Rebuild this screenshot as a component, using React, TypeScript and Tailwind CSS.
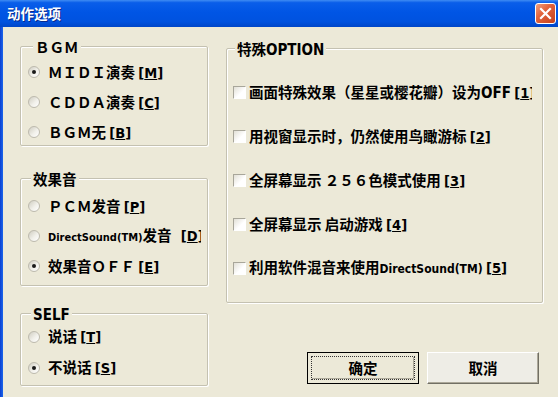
import React from "react";

const NARROW = "font-['Liberation_Sans_Narrow','DejaVu_Sans_Condensed','Arial_Narrow','Liberation_Sans',sans-serif]";

const Latin = ({ children, cls = "text-[15px]" }: { children: React.ReactNode; cls?: string }) => (
  <span className={NARROW + " font-bold " + cls}>{children}</span>
);

const Mn = ({ k, cls = "" }: { k: string; cls?: string }) => (
  <span className={NARROW + " font-bold text-[14.5px] " + cls}>
    [<span className="underline underline-offset-[1px]">{k}</span>]
  </span>
);

const Radio = ({ checked }: { checked?: boolean }) => (
  <span className="w-[12px] h-[12px] shrink-0 rounded-full border border-[#bdbaae] bg-[linear-gradient(135deg,#cfcdc1_0%,#f1f0ea_55%,#ffffff_100%)] flex items-center justify-center">
    {checked && <span className="w-[4px] h-[4px] rounded-full bg-[#1a1a1a]" />}
  </span>
);

const Check = () => (
  <span className="w-[13px] h-[13px] shrink-0 border border-t-[#a8a69a] border-l-[#a8a69a] border-r-white border-b-white bg-[linear-gradient(135deg,#e2e0d6_0%,#ffffff_60%)]" />
);

const Group = ({
  label,
  children,
  cls,
  labelCls = "left-[12px]",
}: {
  label: React.ReactNode;
  children: React.ReactNode;
  cls: string;
  labelCls?: string;
}) => (
  <div
    className={
      "relative border border-[#c4c1b1] rounded-[2px] shadow-[inset_1px_1px_0_#ffffff,1px_1px_0_#ffffff] " + cls
    }
  >
    <div
      className={
        "absolute top-0 -translate-y-1/2 bg-[#ECE9D8] px-[2px] text-[14.5px] font-bold leading-[18px] text-black whitespace-nowrap " +
        labelCls
      }
    >
      {label}
    </div>
    {children}
  </div>
);

const RadioRow = ({ checked, children, h = "h-[30px]" }: { checked?: boolean; children: React.ReactNode; h?: string }) => (
  <div className={"flex items-center pl-[7px] " + h}>
    <Radio checked={checked} />
    <span className="ml-[8px] w-[153px] overflow-hidden whitespace-nowrap text-[14.5px] font-bold leading-[22px] text-black">
      {children}
    </span>
  </div>
);

const CheckRow = ({ children }: { children: React.ReactNode }) => (
  <div className="flex items-center pl-[6px] h-[44px]">
    <Check />
    <span className="ml-[3px] w-[283px] overflow-hidden whitespace-nowrap text-[14.5px] font-bold leading-[22px] text-black">
      {children}
    </span>
  </div>
);

export default function App() {
  return (
    <div className="w-[558px] h-[397px] overflow-hidden bg-[#ECE9D8] flex flex-col font-['Noto_Sans_CJK_SC',sans-serif]">
      {/* Title bar */}
      <div className="h-[27px] shrink-0 flex items-center bg-[linear-gradient(to_bottom,#3f8cf3_0%,#0a5ee9_10%,#0055e5_45%,#0052df_80%,#0046c8_100%)]">
        <span className="ml-[7px] text-white font-bold text-[13.5px] leading-none [text-shadow:1px_1px_0_#0a2a8a]">
          动作选项
        </span>
        <div className="ml-auto mr-[2px] w-[21px] h-[21px] rounded-[3px] border border-white bg-[linear-gradient(135deg,#f0a080_0%,#e2643d_40%,#c4401c_100%)] flex items-center justify-center">
          <svg width="13" height="13" viewBox="0 0 13 13">
            <path d="M2 2 L11 11 M11 2 L2 11" stroke="#ffffff" strokeWidth="2.2" strokeLinecap="square" />
          </svg>
        </div>
      </div>

      {/* Body */}
      <div className="flex-1 flex">
        <div className="w-[3px] shrink-0 bg-[linear-gradient(to_right,#0b3fd0,#1a66ec)]" />
        <div className="flex-1 flex pl-[17px]">
          {/* Left column */}
          <div className="w-[188px] flex flex-col">
            <Group label="ＢＧＭ" cls="mt-[19px] h-[100px] pt-[10px]" labelCls="left-[12px]">
              <RadioRow checked>
                ＭＩＤＩ演奏 <Mn k="M" />
              </RadioRow>
              <RadioRow>
                ＣＤＤＡ演奏 <Mn k="C" />
              </RadioRow>
              <RadioRow>
                ＢＧＭ无 <Mn k="B" />
              </RadioRow>
            </Group>

            <Group label="效果音" cls="mt-[32px] h-[108px] pt-[12px]" labelCls="left-[10px]">
              <RadioRow>
                ＰＣＭ发音 <Mn k="P" />
              </RadioRow>
              <RadioRow>
                <Latin cls="text-[11px]">DirectSound(TM)</Latin>发音 <Mn k="D" cls="ml-[6px]" />
              </RadioRow>
              <RadioRow checked>
                效果音ＯＦＦ <Mn k="E" />
              </RadioRow>
            </Group>

            <Group label={<Latin cls="text-[15px]">SELF</Latin>} cls="mt-[27px] h-[73px] pt-[7px]" labelCls="left-[10px]">
              <RadioRow h="h-[31px]">
                说话 <Mn k="T" />
              </RadioRow>
              <RadioRow checked h="h-[31px]">
                不说话 <Mn k="S" />
              </RadioRow>
            </Group>
          </div>

          {/* Right column */}
          <div className="ml-[18px] w-[317px] flex flex-col">
            <Group
              label={
                <span>
                  特殊<Latin cls="text-[15px]">OPTION</Latin>
                </span>
              }
              cls="mt-[21px] h-[255px] pt-[21px]"
              labelCls="left-[8px]"
            >
              <CheckRow>
                画面特殊效果（星星或樱花瓣）设为<Latin cls="text-[15px]">OFF</Latin> <Mn k="1" />
              </CheckRow>
              <CheckRow>
                用视窗显示时，仍然使用鸟瞰游标 <Mn k="2" />
              </CheckRow>
              <CheckRow>
                全屏幕显示 ２５６色模式使用 <Mn k="3" />
              </CheckRow>
              <CheckRow>
                全屏幕显示 启动游戏 <Mn k="4" />
              </CheckRow>
              <CheckRow>
                利用软件混音来使用<Latin cls="text-[12px]">DirectSound(TM)</Latin> <Mn k="5" />
              </CheckRow>
            </Group>

            <div className="mt-[49px] flex pl-[81px] gap-[8px]">
              <button className="w-[112px] h-[32px] border border-black bg-[#ECE9D8] p-[3px]">
                <div className="w-full h-full border border-dotted border-[#333] flex items-center justify-center text-[14.5px] font-bold text-black shadow-[inset_-1px_-1px_0_#aca899]">
                  确定
                </div>
              </button>
              <button className="w-[112px] h-[32px] border border-t-white border-l-white border-r-[#716f64] border-b-[#716f64] bg-[#EEEDE6] shadow-[inset_-1px_-1px_0_#aca899] flex items-center justify-center text-[14.5px] font-bold text-black">
                取消
              </button>
            </div>
          </div>
        </div>
      </div>
    </div>
  );
}
